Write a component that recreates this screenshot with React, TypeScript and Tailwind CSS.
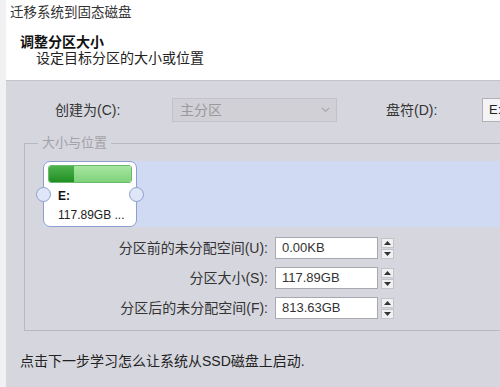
import React from "react";

const font = { fontFamily: '"Liberation Sans", "Noto Sans CJK SC", sans-serif' };

const Spinner: React.FC = () => (
  <div className="flex flex-col gap-[1px] w-[13px]">
    <div className="h-[10px] bg-[#f0f0f2] border border-[#c4c4c8] flex items-center justify-center">
      <svg width="7" height="4" viewBox="0 0 7 4">
        <path d="M0 4 L3.5 0 L7 4 Z" fill="#333" />
      </svg>
    </div>
    <div className="h-[10px] bg-[#f0f0f2] border border-[#c4c4c8] flex items-center justify-center">
      <svg width="7" height="4" viewBox="0 0 7 4">
        <path d="M0 0 L3.5 4 L7 0 Z" fill="#333" />
      </svg>
    </div>
  </div>
);

const rows = [
  { label: "分区前的未分配空间(U):", value: "0.00KB" },
  { label: "分区大小(S):", value: "117.89GB" },
  { label: "分区后的未分配空间(F):", value: "813.63GB" },
];

const App: React.FC = () => {
  return (
    <div className="flex w-[500px] h-[387px] overflow-hidden text-[14px] text-[#222]" style={font}>
      <div className="w-[6px] shrink-0 bg-[#f1f1f3]" />
      <div className="flex-1 flex flex-col min-w-0">
        {/* Header */}
        <div className="h-[80px] shrink-0 bg-white pl-[4px] pt-[4px]">
          <div className="leading-[18px] text-[13.5px] text-[#333]">迁移系统到固态磁盘</div>
          <div className="pl-[10px] pt-[13px] leading-[15px] font-bold text-[14px] text-[#111]">调整分区大小</div>
          <div className="pl-[26px] leading-[17px] text-[14px] text-[#222]">设定目标分区的大小或位置</div>
        </div>

        {/* Body */}
        <div className="flex-1 bg-[#d6d6de] border-t border-[#c3c3ca] flex flex-col">
          <div className="flex items-center pt-[17px] h-[41px] shrink-0">
            <div className="w-[166px] shrink-0 pl-[49px] text-[#333]">创建为(C):</div>
            <div className="w-[165px] h-[24px] shrink-0 bg-[#d0d0d6] border border-[#c2c2c8] flex items-center justify-between pl-[7px] pr-[6px]">
              <span className="text-[#9a9a9e]">主分区</span>
              <svg width="9" height="6" viewBox="0 0 9 6">
                <path d="M1 1 L4.5 4.5 L8 1" fill="none" stroke="#a8a8ae" strokeWidth="1.2" />
              </svg>
            </div>
            <div className="w-[96px] shrink-0 pl-[49px] box-content text-[#333]">盘符(D):</div>
            <div className="h-[24px] w-[40px] shrink-0 bg-[#f4f4f6] border border-[#b0b0b6] flex items-center pl-[6px] text-[13px]">
              E:
            </div>
          </div>

          {/* Group box */}
          <div className="relative ml-[18px] mt-[21px] border border-r-0 border-[#b9b9c1] pt-[17px] pb-[11px] shrink-0">
            <span className="absolute -top-[9px] left-[13px] px-[4px] bg-[#d6d6de] text-[13px] leading-[16px] text-[#a2a2a8]">
              大小与位置
            </span>
            <div className="ml-[18px] h-[66px] bg-[#d0daf2] flex">
              <div className="relative w-[94px] h-[66px] shrink-0 bg-white border-[1.5px] border-[#8e9fcf] rounded-[7px] px-[4px] pt-[3px]">
                <div className="h-[18px] rounded-[3px] border border-[#6cb86c] flex overflow-hidden">
                  <div className="w-[25px] bg-gradient-to-b from-[#4db34d] to-[#1f8f22]" />
                  <div className="flex-1 bg-gradient-to-b from-[#a6e6a0] to-[#7fd27a]" />
                </div>
                <div className="pl-[10px] mt-[6px] font-bold text-[12px] leading-[15px] text-[#111]">E:</div>
                <div className="pl-[10px] mt-[4px] text-[12px] leading-[15px] text-[#222]">117.89GB ...</div>
                <div className="absolute left-[-8px] top-[25px] w-[15px] h-[15px] rounded-full bg-[#dfe6f7] border border-[#8e9fcf]" />
                <div className="absolute right-[-8px] top-[25px] w-[15px] h-[15px] rounded-full bg-[#dfe6f7] border border-[#8e9fcf]" />
              </div>
            </div>

            <div className="flex flex-col gap-[8px] mt-[10px]">
              {rows.map((r) => (
                <div key={r.label} className="flex items-center h-[22px]">
                  <div className="w-[246px] shrink-0 text-right text-[#333] pr-[3px]">{r.label}</div>
                  <div className="ml-[4px] w-[103px] h-[22px] shrink-0 bg-white border border-[#a8a8b0] flex items-center pl-[6px] text-[13px] text-[#333]">
                    {r.value}
                  </div>
                  <div className="ml-[3px]">
                    <Spinner />
                  </div>
                </div>
              ))}
            </div>
          </div>

          <div className="pl-[14px] pt-[21px] leading-[18px] text-[#222]">点击下一步学习怎么让系统从SSD磁盘上启动.</div>
        </div>
      </div>
    </div>
  );
};

export default App;
